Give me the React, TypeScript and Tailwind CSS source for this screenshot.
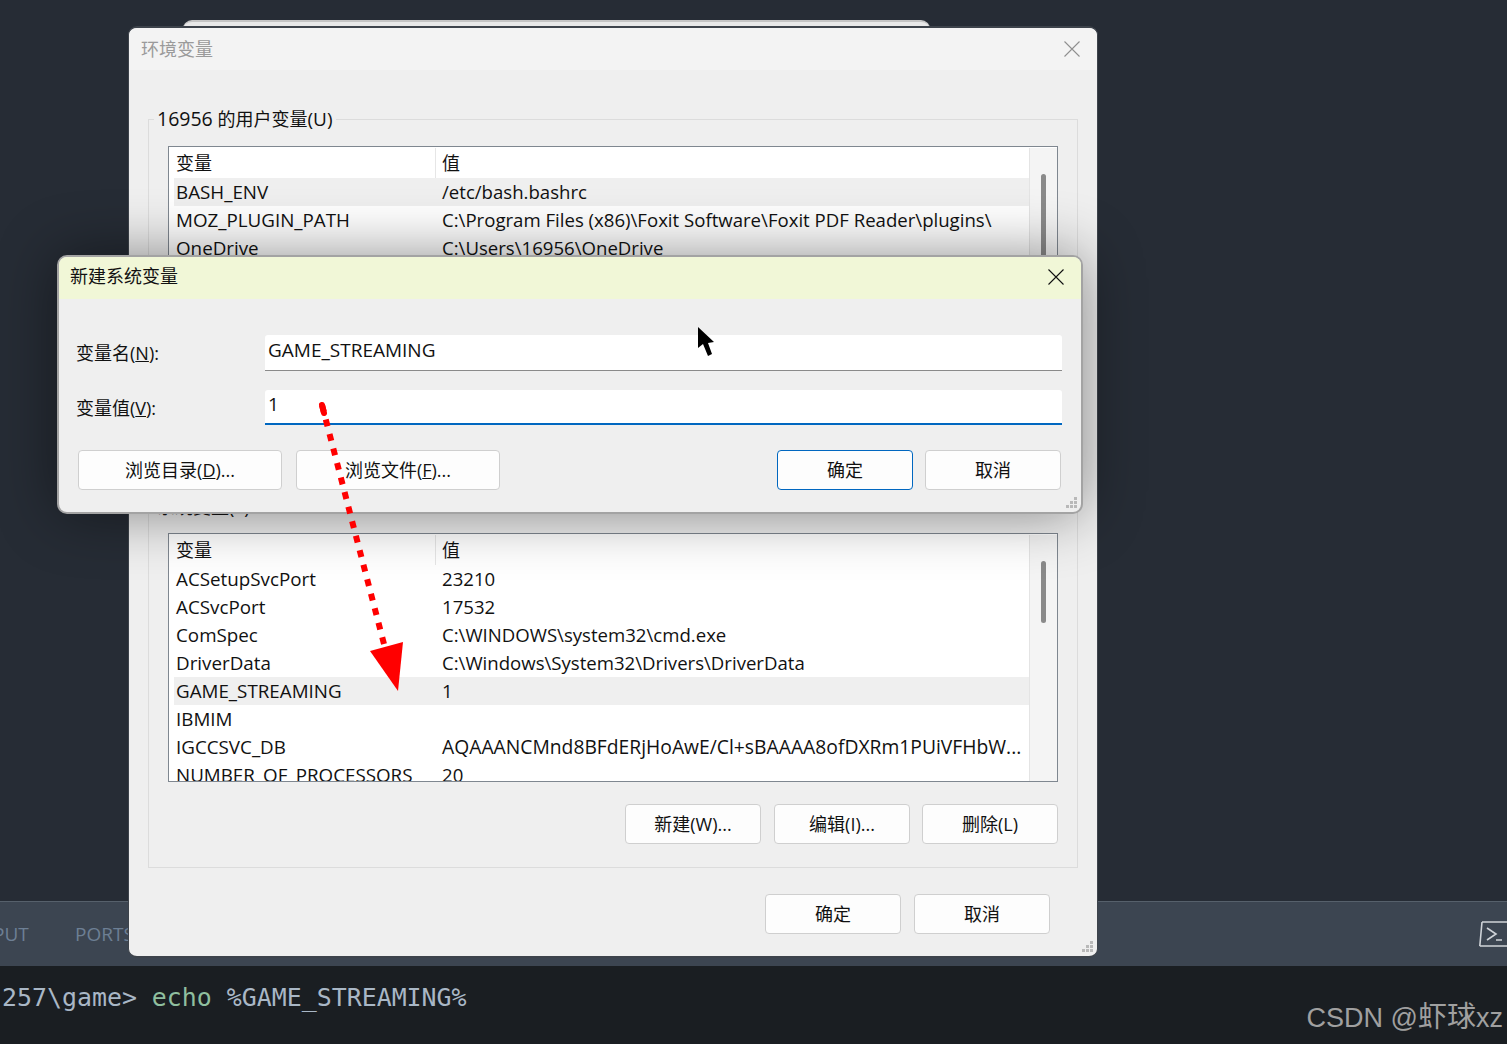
const FONT = '"Open Sans","Noto Sans CJK SC",sans-serif';

function Btn({ children, w, primary }: { children: React.ReactNode; w: string; primary?: boolean }) {
  return (
    <div
      className={`${w} h-10 rounded-[4px] border bg-[#fdfdfd] flex items-center justify-center text-[18px] text-[#111] ${
        primary ? 'border-[#0067c0]' : 'border-[#cfcfcf]'
      }`}
    >
      {children}
    </div>
  );
}

function Grip() {
  return (
    <svg width="12" height="12" viewBox="0 0 12 12" className="absolute right-[3px] bottom-[3px]" fill="#b9b9b9">
      <rect x="8" y="0" width="3" height="3" />
      <rect x="4" y="4" width="3" height="3" />
      <rect x="8" y="4" width="3" height="3" />
      <rect x="0" y="8" width="3" height="3" />
      <rect x="4" y="8" width="3" height="3" />
      <rect x="8" y="8" width="3" height="3" />
    </svg>
  );
}

function XIcon({ size, color }: { size: number; color: string }) {
  return (
    <svg width={size} height={size} viewBox="0 0 16 16" fill="none" stroke={color} strokeWidth="1.1">
      <path d="M0.5 0.5 15.5 15.5M15.5 0.5 0.5 15.5" />
    </svg>
  );
}

type Row = [string, string, boolean?, boolean?];

function VarList({ rows, h, thumbH }: { rows: Row[]; h: string; thumbH: string }) {
  return (
    <div className={`${h} border border-[#7f8790] bg-white flex overflow-hidden`}>
      <div className="flex-1 min-w-0 pl-[5px] pt-px">
        <div className="h-[30px] flex items-center text-[#111] bg-white">
          <div className="w-[262px] h-full pl-[2px] flex items-center border-r border-[#e6e6e6]">变量</div>
          <div className="pl-[6px]">值</div>
        </div>
        {rows.map(([a, b, sel, long]) => (
          <div key={a} className={`h-7 flex items-center whitespace-nowrap text-[18.8px] ${sel ? 'bg-[#efefef]' : ''}`}>
            <div className="w-[262px] pl-[2px] shrink-0">{a}</div>
            <div className={`pl-[6px] ${long ? 'text-[19.3px]' : 'text-[18.6px]'}`}>{b}</div>
          </div>
        ))}
      </div>
      <div className="w-[28px] shrink-0 mt-px border-l border-[#e4e4e4] bg-[#f4f4f4] pt-[26px] flex justify-center">
        <div className={`w-[5px] ${thumbH} rounded-full bg-[#8a8a8a]`} />
      </div>
    </div>
  );
}

function Group({ title, className, children }: { title: React.ReactNode; className: string; children: React.ReactNode }) {
  return (
    <div className={`relative border border-[#dcdcdc] ${className}`}>
      <span className="absolute left-[5px] -top-[14px] px-[3px] bg-[#efefef] text-[18px] leading-[26px] text-[#111]">{title}</span>
      {children}
    </div>
  );
}

const userRows: Row[] = [
  ['BASH_ENV', '/etc/bash.bashrc', true],
  ['MOZ_PLUGIN_PATH', 'C:\\Program Files (x86)\\Foxit Software\\Foxit PDF Reader\\plugins\\'],
  ['OneDrive', 'C:\\Users\\16956\\OneDrive'],
  ['Path', 'C:\\Users\\16956\\AppData\\Local\\Microsoft\\WindowsApps'],
];

const sysRows: Row[] = [
  ['ACSetupSvcPort', '23210'],
  ['ACSvcPort', '17532'],
  ['ComSpec', 'C:\\WINDOWS\\system32\\cmd.exe'],
  ['DriverData', 'C:\\Windows\\System32\\Drivers\\DriverData'],
  ['GAME_STREAMING', '1', true],
  ['IBMIM', ''],
  ['IGCCSVC_DB', 'AQAAANCMnd8BFdERjHoAwE/Cl+sBAAAA8ofDXRm1PUiVFHbW...', false, true],
  ['NUMBER_OF_PROCESSORS', '20'],
];

function EnvWindow() {
  return (
    <div className="absolute left-[128px] top-[26px] w-[970px] h-[932px] rounded-[9px] border-y-2 border-x border-[#3d434b] bg-[#efefef] overflow-hidden text-[18px] text-[#111]">
      <div className="h-[42px] bg-[#f3f3f3] flex items-center justify-between pl-[12px] pr-[17px] text-[#9a9a9a]">
        <span>环境变量</span>
        <XIcon size={16} color="#8f8f8f" />
      </div>
      <div className="px-[19px] pt-[49px]">
        <Group
          title={
            <>
              <span className="text-[19.5px]">16956</span> 的用户变量<span className="text-[19px]">(U)</span>
            </>
          }
          className="h-[375px] px-[19px] pt-[26px]"
        >
          <VarList rows={userRows} h="h-[260px]" thumbH="h-[150px]" />
        </Group>
        <Group title="系统变量(S)" className="mt-[13px] h-[361px] px-[19px] pt-[25px]">
          <VarList rows={sysRows} h="h-[249px]" thumbH="h-[62px]" />
          <div className="flex justify-end gap-3 mt-[22px]">
            <Btn w="w-[136px] mr-px">新建(W)...</Btn>
            <Btn w="w-[136px]">编辑(I)...</Btn>
            <Btn w="w-[136px]">删除(L)</Btn>
          </div>
        </Group>
        <div className="flex justify-end gap-[13px] mt-[26px] pr-[28px]">
          <Btn w="w-[136px]">确定</Btn>
          <Btn w="w-[136px]">取消</Btn>
        </div>
      </div>
      <Grip />
    </div>
  );
}

function Field({ label, u, tail, value, focus }: { label: string; u: string; tail: string; value: string; focus?: boolean }) {
  return (
    <div className="flex items-start">
      <div className="w-[206px] pl-[17px] pt-[5px] shrink-0 text-[18px]">
        {label}(<span className="underline">{u}</span>){tail}
      </div>
      <div
        className={`w-[797px] bg-white pl-[3px] leading-[28px] rounded-t-[3px] text-[19px] ${
          focus ? 'h-[35px] border-b-2 border-[#0067c0]' : 'h-[36px] pt-px border-b border-[#8a8a8a]'
        }`}
      >
        {value}
      </div>
    </div>
  );
}

function NewVarDialog() {
  return (
    <div className="absolute left-[57px] top-[255px] w-[1026px] h-[259px] rounded-[10px] border-2 border-[#a3a3a3] bg-[#efefef] text-[#111] overflow-hidden shadow-[0_0_60px_rgba(0,0,0,0.45)]">
      <div className="h-[42px] bg-[#f1f7d7] flex items-center justify-between pl-[11px] pr-[17px] pb-[3px] text-[18px]">
        <span>新建系统变量</span>
        <XIcon size={16} color="#111" />
      </div>
      <div className="pt-[36px] flex flex-col gap-[19px]">
        <Field label="变量名" u="N" tail=":" value="GAME_STREAMING" />
        <Field label="变量值" u="V" tail=":" value="1" focus />
      </div>
      <div className="flex pl-[19px] pr-[20px] mt-[25px]">
        <div className="flex gap-[14px]">
          <Btn w="w-[204px]">浏览目录(<span className="underline">D</span>)...</Btn>
          <Btn w="w-[204px]">浏览文件(<span className="underline">F</span>)...</Btn>
        </div>
        <div className="flex gap-3 ml-auto">
          <Btn w="w-[136px]" primary>确定</Btn>
          <Btn w="w-[136px]">取消</Btn>
        </div>
      </div>
      <Grip />
    </div>
  );
}

export default function App() {
  return (
    <div
      className="relative w-[1507px] h-[1044px] overflow-hidden flex flex-col bg-[#262c35]"
      style={{ fontFamily: FONT }}
    >
      <div className="h-[901px] shrink-0 overflow-hidden">
        <div className="-mt-[21px] pl-[50px] text-[20px] leading-[24px] text-[#4e9a5c]">1、设置变量</div>
      </div>
      <div className="h-[65px] shrink-0 border-t border-[#56606b] bg-[#3c4551] flex items-center pl-[75px] relative text-[19px] text-[#6d7f94]">
        <span className="absolute -left-[7px]">PUT</span>
        <span>PORTS</span>
        <svg width="28" height="26" viewBox="0 0 28 26" className="ml-auto" fill="none" stroke="#cfd3d8" strokeWidth="1.6">
          <path d="M3 1H28M0.8 25H28M3 1 0.8 25" />
          <path d="M8 7l9 6-9 6M17 19h6" />
        </svg>
      </div>
      <div
        className="flex-1 bg-[#1a1e22] relative pl-[2px] pt-[15px] text-[24.9px] leading-[34px] text-[#a9b7c6]"
        style={{ fontFamily: '"DejaVu Sans Mono",monospace' }}
      >
        257\game&gt; <span className="text-[#8fbf9f]">echo</span> %GAME_STREAMING%
        <div
          className="absolute right-[4px] bottom-[6px] text-[27px] leading-[40px] text-[#a0a0a0]"
          style={{ fontFamily: '"Liberation Sans","Noto Sans CJK SC",sans-serif' }}
        >
          CSDN @<span className="text-[29px]">虾球</span>xz
        </div>
      </div>

      <div className="absolute left-[183px] top-[20px] w-[747px] h-[20px] rounded-t-[9px] border-t-2 border-[#c4c4c4] bg-[#e8e8e8]" />
      <EnvWindow />
      <NewVarDialog />

      <svg className="absolute left-0 top-0 pointer-events-none" width="1507" height="1044" fill="none">
        <path d="M322 405 385 648" stroke="#ff0000" strokeWidth="6" strokeDasharray="7 8" />
        <path d="M322 405 324 413" stroke="#ff0000" strokeWidth="6" strokeLinecap="round" />
        <polygon points="370,651 403,642 398,691" fill="#ff0000" />
        <polygon points="698,327 698,348 703,344 708,356 712,354 708,343 714,342" fill="#000" />
      </svg>
    </div>
  );
}
